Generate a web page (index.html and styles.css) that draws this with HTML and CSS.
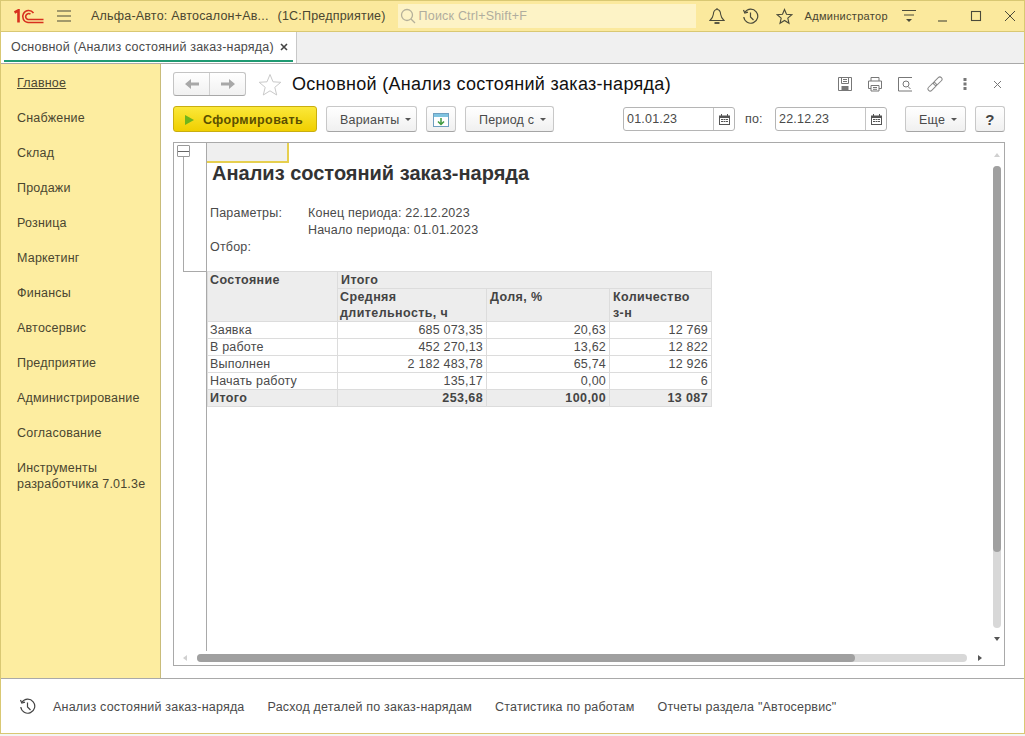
FILE: index.html
```html
<!DOCTYPE html>
<html lang="ru">
<head>
  <meta charset="UTF-8">
  <title>Основной (Анализ состояний заказ-наряда)</title>
  <link rel="stylesheet" href="styles.css">
</head>
<body>
  <div class="window">
    <!-- Top bar -->
    <header class="topbar">
      <svg class="logo" width="30" height="15" viewBox="0 0 30 15" fill="none" stroke="#d7301f">
        <path d="M0.500 3.500 L4.500 1.300 V13.500" stroke-width="2.600"/>
        <path d="M19.500 4 A6 6 0 1 0 14 13.500 H29.500" stroke-width="1.600"/>
        <path d="M16.500 5.200 A3 3 0 1 0 14 10.500 H29.500" stroke-width="1.600"/>
      </svg>
      <svg class="menu-icon" width="16" height="14" viewBox="0 0 16 14" stroke="#4a4a3a" stroke-width="1.200"><path d="M1 2 H15 M1 7 H15 M1 12 H15"/></svg>
      <span class="app-name">Альфа-Авто: Автосалон+Ав...</span>
      <span class="app-kind">(1С:Предприятие)</span>
      <div class="search">
        <svg width="18" height="18" viewBox="0 0 18 18" fill="none" stroke="#b5b09a" stroke-width="1.300"><circle cx="8" cy="8" r="5.500"/><path d="M12 12 L16 16"/></svg>
        <span>Поиск Ctrl+Shift+F</span>
      </div>
      <div class="top-icons">
        <svg class="ic-bell" width="16" height="18" viewBox="0 0 16 18" fill="none" stroke="#4a4a3a" stroke-width="1.100"><path d="M8 1 V2.500 M8 2.500 C5 2.500 4.500 5 4.300 7.500 C4 10.500 2.500 12 1 13.500 H15 C13.500 12 12 10.500 11.700 7.500 C11.500 5 11 2.500 8 2.500 Z"/><path d="M5.500 16 H10.500" stroke-width="1.800"/></svg>
        <svg class="ic-history" width="17" height="17" viewBox="0 0 17 17" fill="none" stroke="#4a4a3a" stroke-width="1.200"><path d="M3 4.200 A7 7 0 1 1 1.800 9"/><path d="M1.500 2 L2.800 5 L6 4.200" /><path d="M8.500 4.500 V9 L11.500 12"/></svg>
        <svg class="ic-star" width="17" height="17" viewBox="0 0 17 17" fill="none" stroke="#4a4a3a" stroke-width="1.100"><path d="M8.500 1.500 L10.500 6.300 L15.800 6.700 L11.800 10.100 L13 15.300 L8.500 12.500 L4 15.300 L5.200 10.100 L1.200 6.700 L6.500 6.300 Z"/></svg>
      </div>
      <span class="user">Администратор</span>
      <svg class="ic-settings" width="16" height="14" viewBox="0 0 16 14" stroke="#4a4a3a" stroke-width="1.100"><path d="M1 1.500 H15 M3 6 H13"/><path d="M5 10 H11 L8 13 Z" fill="#4a4a3a" stroke="none"/></svg>
      <div class="win-buttons">
        <svg width="12" height="12" viewBox="0 0 12 12" stroke="#4a4a3a" stroke-width="1.100"><path d="M2 11 H11"/></svg>
        <svg width="12" height="12" viewBox="0 0 12 12" fill="none" stroke="#4a4a3a" stroke-width="1.100"><rect x="1.500" y="1.500" width="9" height="9"/></svg>
        <svg width="12" height="12" viewBox="0 0 12 12" stroke="#4a4a3a" stroke-width="1"><path d="M1 1 L11 11 M11 1 L1 11"/></svg>
      </div>
    </header>

    <!-- Open tabs -->
    <div class="tabbar">
      <div class="tab">
        <span>Основной (Анализ состояний заказ-наряда)</span>
        <svg width="8" height="8" viewBox="0 0 8 8" stroke="#444" stroke-width="1.600"><path d="M1 1 L7 7 M7 1 L1 7"/></svg>
      </div>
    </div>

    <div class="content">
      <!-- Sections -->
      <nav class="sidebar">
        <a class="nav-item current">Главное</a>
        <a class="nav-item">Снабжение</a>
        <a class="nav-item">Склад</a>
        <a class="nav-item">Продажи</a>
        <a class="nav-item">Розница</a>
        <a class="nav-item">Маркетинг</a>
        <a class="nav-item">Финансы</a>
        <a class="nav-item">Автосервис</a>
        <a class="nav-item">Предприятие</a>
        <a class="nav-item">Администрирование</a>
        <a class="nav-item">Согласование</a>
        <a class="nav-item">Инструменты разработчика 7.01.3е</a>
      </nav>

      <main class="main">
        <div class="title-row">
          <div class="nav-btns">
            <div class="nav-btn">
              <svg width="14" height="10" viewBox="0 0 14 10" fill="#a8a8a8"><path d="M0 5 L6 0 V3.500 H14 V6.500 H6 V10 Z"/></svg>
            </div>
            <div class="nav-btn">
              <svg width="14" height="10" viewBox="0 0 14 10" fill="#a8a8a8"><path d="M14 5 L8 0 V3.500 H0 V6.500 H8 V10 Z"/></svg>
            </div>
          </div>
          <svg class="fav" width="24" height="23" viewBox="0 0 24 23" fill="none" stroke="#c9c9c9" stroke-width="1"><path d="M12 1.500 L15 8.800 L22.800 9.300 L16.800 14.300 L18.700 22 L12 17.800 L5.300 22 L7.200 14.300 L1.200 9.300 L9 8.800 Z"/></svg>
          <h1 class="form-title">Основной (Анализ состояний заказ-наряда)</h1>
          <div class="form-icons">
            <svg width="16" height="16" viewBox="0 0 16 16" fill="none" stroke="#777" stroke-width="1"><path d="M1.500 1.500 H14.500 V14.500 H1.500 Z"/><path d="M4.500 1.500 V7.500 H11.500 V1.500 M6 3.500 H10 M6 5.500 H10"/><rect x="5" y="10.500" width="6" height="4" fill="#777"/></svg>
            <svg width="16" height="16" viewBox="0 0 16 16" fill="none" stroke="#777" stroke-width="1"><path d="M4 5 V1.500 H12 V5"/><path d="M4 12.500 H1.500 V5 H14.500 V12.500 H12"/><path d="M4 9.500 H12 V15 H4 Z M6 11.500 H10 M6 13.300 H10"/></svg>
            <svg width="16" height="16" viewBox="0 0 16 16" fill="none" stroke="#777" stroke-width="1"><path d="M15 1.500 H1.500 V15 H15"/><circle cx="9" cy="8" r="3"/><path d="M11 10.500 L13.500 13"/></svg>
            <svg width="16" height="16" viewBox="0 0 16 16" fill="none" stroke="#888" stroke-width="1"><g transform="rotate(-45 8 8)"><rect x="-1" y="5.800" width="10" height="4.400" rx="2.200"/><rect x="7" y="5.800" width="10" height="4.400" rx="2.200"/></g></svg>
            <svg class="dots" width="4" height="12" viewBox="0 0 4 12" fill="#777"><rect x="0.500" y="0" width="3" height="3"/><rect x="0.500" y="4.500" width="3" height="3"/><rect x="0.500" y="9" width="3" height="3"/></svg>
            <svg class="close" width="9" height="9" viewBox="0 0 9 9" stroke="#777" stroke-width="1"><path d="M1 1 L8 8 M8 1 L1 8"/></svg>
          </div>
        </div>

        <div class="command-row">
          <button class="btn btn-primary">
            <svg width="9" height="10" viewBox="0 0 9 10" fill="#6fb51c"><path d="M0 0 L9 5 L0 10 Z"/></svg>
            Сформировать
          </button>
          <button class="btn btn-caret btn-variants">Варианты <i class="caret"></i></button>
          <button class="btn btn-icon">
            <svg width="16" height="14" viewBox="0 0 16 14" fill="none"><rect x="0.500" y="0.500" width="15" height="13" fill="#fff" stroke="#6f9fc0"/><rect x="1" y="1" width="14" height="3" fill="#7fc3e0"/><path d="M8 5 V11 M5 8.500 L8 11.500 L11 8.500" stroke="#3f9a3f" stroke-width="1.500"/></svg>
          </button>
          <button class="btn btn-caret btn-period">Период с <i class="caret"></i></button>
          <div class="date-group">
            <div class="date-field">
              <span class="date-value">01.01.23</span>
              <span class="date-btn">
                <svg width="11" height="11" viewBox="0 0 11 11" fill="#555"><path d="M0 1.500 H2 V0 H3 V1.500 H8 V0 H9 V1.500 H11 V11 H0 Z M1 4 V10 H10 V4 Z"/><path d="M2 5 H4 V6 H2 Z M4.500 5 H6.500 V6 H4.500 Z M7 5 H9 V6 H7 Z M2 7 H4 V8 H2 Z M4.500 7 H6.500 V8 H4.500 Z M7 7 H9 V8 H7 Z"/></svg>
              </span>
            </div>
            <label class="date-label">по:</label>
            <div class="date-field">
              <span class="date-value">22.12.23</span>
              <span class="date-btn">
                <svg width="11" height="11" viewBox="0 0 11 11" fill="#555"><path d="M0 1.500 H2 V0 H3 V1.500 H8 V0 H9 V1.500 H11 V11 H0 Z M1 4 V10 H10 V4 Z"/><path d="M2 5 H4 V6 H2 Z M4.500 5 H6.500 V6 H4.500 Z M7 5 H9 V6 H7 Z M2 7 H4 V8 H2 Z M4.500 7 H6.500 V8 H4.500 Z M7 7 H9 V8 H7 Z"/></svg>
              </span>
            </div>
          </div>
          <button class="btn btn-caret btn-more">Еще <i class="caret"></i></button>
          <button class="btn btn-help">?</button>
        </div>

        <!-- Report -->
        <section class="report">
          <div class="report-view">
            <div class="outline">
              <div class="outline-toggle"></div>
              <div class="outline-line"></div>
            </div>
            <div class="sheet">
              <div class="sheet-corner"></div>
              <h2 class="report-title">Анализ состояний заказ-наряда</h2>
              <div class="params">
                <span>Параметры:</span><span>Конец периода: 22.12.2023</span>
                <span></span><span>Начало периода: 01.01.2023</span>
                <span>Отбор:</span><span></span>
              </div>
              <table class="report-table">
                <colgroup><col class="col-a"><col class="col-b"><col class="col-c"><col class="col-d"></colgroup>
                <tr class="head"><td rowspan="2">Состояние</td><td colspan="3">Итого</td></tr>
                <tr class="head head-tall"><td>Средняя<br>длительность, ч</td><td>Доля, %</td><td>Количество<br>з-н</td></tr>
                <tr><td>Заявка</td><td class="num">685 073,35</td><td class="num">20,63</td><td class="num">12 769</td></tr>
                <tr><td>В работе</td><td class="num">452 270,13</td><td class="num">13,62</td><td class="num">12 822</td></tr>
                <tr><td>Выполнен</td><td class="num">2 182 483,78</td><td class="num">65,74</td><td class="num">12 926</td></tr>
                <tr><td>Начать работу</td><td class="num">135,17</td><td class="num">0,00</td><td class="num">6</td></tr>
                <tr class="total"><td>Итого</td><td class="num">253,68</td><td class="num">100,00</td><td class="num">13 087</td></tr>
              </table>
            </div>
            <div class="vscroll">
              <i class="arrow arrow-up"></i>
              <div class="vtrack"><div class="vthumb"></div></div>
              <i class="arrow arrow-down"></i>
            </div>
          </div>
          <div class="hscroll">
            <i class="arrow arrow-left"></i>
            <div class="htrack"><div class="hthumb"></div></div>
            <i class="arrow arrow-right"></i>
          </div>
        </section>
      </main>
    </div>

    <!-- Related reports -->
    <footer class="footer">
      <svg width="17" height="17" viewBox="0 0 17 17" fill="none" stroke="#444" stroke-width="1.200"><path d="M3 4.200 A7 7 0 1 1 1.800 9"/><path d="M1.500 2 L2.800 5 L6 4.200"/><path d="M8.500 4.500 V9 L11.500 12"/></svg>
      <a class="footer-link">Анализ состояний заказ-наряда</a>
      <a class="footer-link">Расход деталей по заказ-нарядам</a>
      <a class="footer-link">Статистика по работам</a>
      <a class="footer-link">Отчеты раздела "Автосервис"</a>
    </footer>
  </div>
</body>
</html>
```

FILE: styles.css
```css
/* Page */
* {
  box-sizing: border-box;
}

body {
  margin: 0;
  height: 736px;
  overflow: hidden;
  font-family: "Liberation Sans", Arial, sans-serif;
  font-size: 12.500px;
  letter-spacing: 0.200px;
  color: #4a4a4a;
  background-color: #f4f4f4;
}

.window {
  display: flex;
  flex-direction: column;
  width: 1025px;
  height: 734px;
  background-color: #fff;
  border: 1px solid #d9c873;
}

/* Top bar */
.topbar {
  display: flex;
  align-items: center;
  height: 31px;
  flex-shrink: 0;
  background-color: #fbe99d;
  border-bottom: 1px solid #d9c873;
  color: #4a4630;
}

.logo {
  margin-left: 13px;
}

.menu-icon {
  margin-left: 12px;
}

.app-name {
  margin-left: 19px;
}

.app-kind {
  margin-left: 9px;
}

.search {
  display: flex;
  align-items: center;
  gap: 2px;
  width: 298px;
  height: 24px;
  margin-left: 12px;
  padding-left: 1px;
  background-color: #fdf3c6;
  color: #b0ad9e;
}

.top-icons {
  display: flex;
  align-items: center;
  gap: 17px;
  margin-left: 13px;
}

.user {
  margin-left: 12px;
  font-size: 11px;
  letter-spacing: 0.300px;
}

.ic-settings {
  margin-left: 13px;
}

.win-buttons {
  display: flex;
  gap: 22px;
  margin-left: 19px;
}

/* Tabs */
.tabbar {
  height: 32px;
  flex-shrink: 0;
  background-color: #f0f0f0;
  border-bottom: 1px solid #a9a9a9;
}

.tab {
  display: flex;
  align-items: center;
  gap: 6px;
  width: 296px;
  height: 31px;
  padding: 0 0 2px 10px;
  background-color: #fff;
  border-right: 1px solid #c8c8c8;
  position: relative;
}

.tab::after {
  content: "";
  position: absolute;
  left: 3px;
  right: 3px;
  bottom: 1px;
  height: 2px;
  background-color: #1f9a72;
}

/* Sidebar */
.content {
  display: flex;
  flex: 1;
  min-height: 0;
}

.sidebar {
  display: flex;
  flex-direction: column;
  width: 160px;
  flex-shrink: 0;
  padding-top: 11px;
  background-color: #fdeda0;
  border-right: 1px solid #c9bc7a;
}

.nav-item {
  padding: 0 6px 0 16px;
  margin-bottom: 19px;
  line-height: 16px;
  color: #4a4630;
}

.nav-item.current {
  text-decoration: underline;
}

/* Form */
.main {
  display: flex;
  flex-direction: column;
  flex: 1;
  min-width: 0;
  padding: 8px 19px 12px 12px;
}

.title-row {
  display: flex;
  align-items: center;
  height: 24px;
}

.nav-btns {
  display: flex;
  width: 73px;
  height: 24px;
  background: linear-gradient(#fff, #f1f1f1);
  border: 1px solid #c4c4c4;
  border-bottom-color: #a8a8a8;
  border-radius: 3px;
}

.nav-btn {
  display: flex;
  flex: 1;
  align-items: center;
  justify-content: center;
}

.nav-btn + .nav-btn {
  border-left: 1px solid #d0d0d0;
}

.fav {
  margin-left: 12px;
}

.form-title {
  margin: 0 0 0 10px;
  font-size: 18px;
  letter-spacing: 0.300px;
  font-weight: normal;
  color: #111;
}

.form-icons {
  display: flex;
  align-items: center;
  gap: 14px;
  margin-left: auto;
}

.form-icons .dots {
  margin-left: 6px;
}

.form-icons .close {
  margin: 0 3px 0 12px;
}

/* Command bar */
.command-row {
  display: flex;
  align-items: center;
  height: 26px;
  margin-top: 10px;
}

.btn {
  display: flex;
  align-items: center;
  justify-content: center;
  height: 26px;
  padding: 1px 0 0;
  font-family: inherit;
  font-size: inherit;
  letter-spacing: inherit;
  color: #4a4a4a;
  background: linear-gradient(#fff, #f0f0f0);
  border: 1px solid #c8c8c8;
  border-bottom-color: #a5a5a5;
  border-radius: 3px;
}

.btn-caret {
  justify-content: flex-start;
  gap: 6px;
  padding-left: 13px;
}

.btn-primary {
  justify-content: flex-start;
  gap: 9px;
  width: 144px;
  padding-left: 11px;
  font-weight: bold;
  letter-spacing: 0.400px;
  color: #5a4f00;
  background: linear-gradient(#fbe83a, #f0cf00);
  border-color: #c9ae10;
}

.btn-variants {
  width: 91px;
  margin-left: 9px;
}

.btn-icon {
  width: 30px;
  margin-left: 9px;
}

.btn-period {
  width: 89px;
  margin-left: 9px;
}

.btn-more {
  width: 61px;
  margin-left: 18px;
}

.btn-help {
  width: 30px;
  margin-left: 9px;
  font-size: 15px;
  font-weight: bold;
  color: #444;
}

.caret {
  width: 0;
  height: 0;
  border-left: 3px solid transparent;
  border-right: 3px solid transparent;
  border-top: 3px solid #555;
}

.date-group {
  display: flex;
  align-items: center;
  margin-left: 69px;
}

.date-field {
  display: flex;
  width: 112px;
  height: 24px;
  background-color: #fff;
  border: 1px solid #b5b5b5;
  border-radius: 3px;
}

.date-value {
  flex: 1;
  padding-left: 3px;
  line-height: 22px;
}

.date-btn {
  display: flex;
  align-items: center;
  justify-content: center;
  width: 21px;
  border-left: 1px solid #c4c4c4;
}

.date-label {
  width: 40px;
  padding-left: 10px;
}

/* Report */
.report {
  display: flex;
  flex-direction: column;
  flex: 1;
  min-height: 0;
  margin-top: 10px;
  border: 1px solid #a9a9a9;
}

.report-view {
  display: flex;
  flex: 1;
  min-height: 0;
}

.outline {
  width: 33px;
  flex-shrink: 0;
  border-right: 1px solid #a9a9a9;
  position: relative;
}

.outline-toggle {
  position: absolute;
  left: 3px;
  top: 2px;
  width: 13px;
  height: 12px;
  background: linear-gradient(to bottom, transparent 5px, #666 5px, #666 6px, transparent 6px), #fff;
  border: 1px solid #999;
  border-radius: 1px;
}

.outline-line {
  position: absolute;
  left: 9px;
  top: 14px;
  width: 24px;
  height: 115px;
  border-left: 1px solid #a9a9a9;
  border-bottom: 1px solid #a9a9a9;
}

.sheet {
  flex: 1;
  min-width: 0;
}

.sheet-corner {
  width: 82px;
  height: 20px;
  background-color: #efefef;
  border-right: 2px solid #e6cf4f;
  border-bottom: 2px solid #e6cf4f;
}

.report-title {
  margin: 0 0 0 5px;
  height: 25px;
  line-height: 21px;
  font-size: 20px;
  letter-spacing: 0;
  font-weight: bold;
  color: #333;
}

.params {
  display: grid;
  grid-template-columns: 98px 1fr;
  grid-auto-rows: 17px;
  margin: 17px 0 0 3px;
  line-height: 17px;
}

.report-table {
  margin: 15px 0 0 0;
  width: 504px;
  table-layout: fixed;
  border-collapse: collapse;
}

.col-a { width: 130px; }
.col-b { width: 149px; }
.col-c { width: 123px; }
.col-d { width: 102px; }

.report-table td {
  height: 17px;
  padding: 1px 3px 0 3px;
  line-height: 15px;
  vertical-align: top;
  border: 1px solid #dcdcdc;
  white-space: nowrap;
}

.report-table td:first-child {
  padding-left: 2px;
}

.report-table .head td,
.report-table .total td {
  background-color: #ededed;
  font-weight: bold;
  letter-spacing: 0.400px;
  color: #444;
}

.report-table .num {
  text-align: right;
}

.report-table .head-tall td {
  height: 33px;
  padding-top: 0;
  line-height: 16px;
}

/* Scrollbars */
.vscroll {
  display: flex;
  flex-direction: column;
  align-items: center;
  width: 14px;
  flex-shrink: 0;
  padding-top: 10px;
}

.vtrack {
  width: 8px;
  height: 462px;
  margin: 9px 0 0;
  background-color: #d8d8d8;
  border-radius: 4px;
}

.vthumb {
  height: 386px;
  background-color: #a0a0a0;
  border-radius: 4px;
}

.hscroll {
  display: flex;
  align-items: center;
  height: 14px;
  padding-left: 9px;
}

.htrack {
  width: 770px;
  height: 8px;
  margin: 0 11px 0 10px;
  background-color: #d8d8d8;
  border-radius: 4px;
}

.hthumb {
  width: 658px;
  height: 8px;
  background-color: #a0a0a0;
  border-radius: 4px;
}

.arrow {
  display: block;
  width: 0;
  height: 0;
  flex-shrink: 0;
}

.arrow-up {
  border-left: 3px solid transparent;
  border-right: 3px solid transparent;
  border-bottom: 4px solid #d0d0d0;
}

.arrow-down {
  margin-top: 9px;
  border-left: 3px solid transparent;
  border-right: 3px solid transparent;
  border-top: 4px solid #555;
}

.arrow-left {
  border-top: 3px solid transparent;
  border-bottom: 3px solid transparent;
  border-right: 4px solid #d0d0d0;
}

.arrow-right {
  border-top: 3px solid transparent;
  border-bottom: 3px solid transparent;
  border-left: 4px solid #555;
}

/* Footer */
.footer {
  display: flex;
  align-items: center;
  height: 55px;
  flex-shrink: 0;
  padding: 1px 0 0 18px;
  background-color: #fff;
  border-top: 1px solid #a9a9a9;
}

.footer-link {
  margin-left: 23px;
}

.footer svg + .footer-link {
  margin-left: 17px;
}
```
